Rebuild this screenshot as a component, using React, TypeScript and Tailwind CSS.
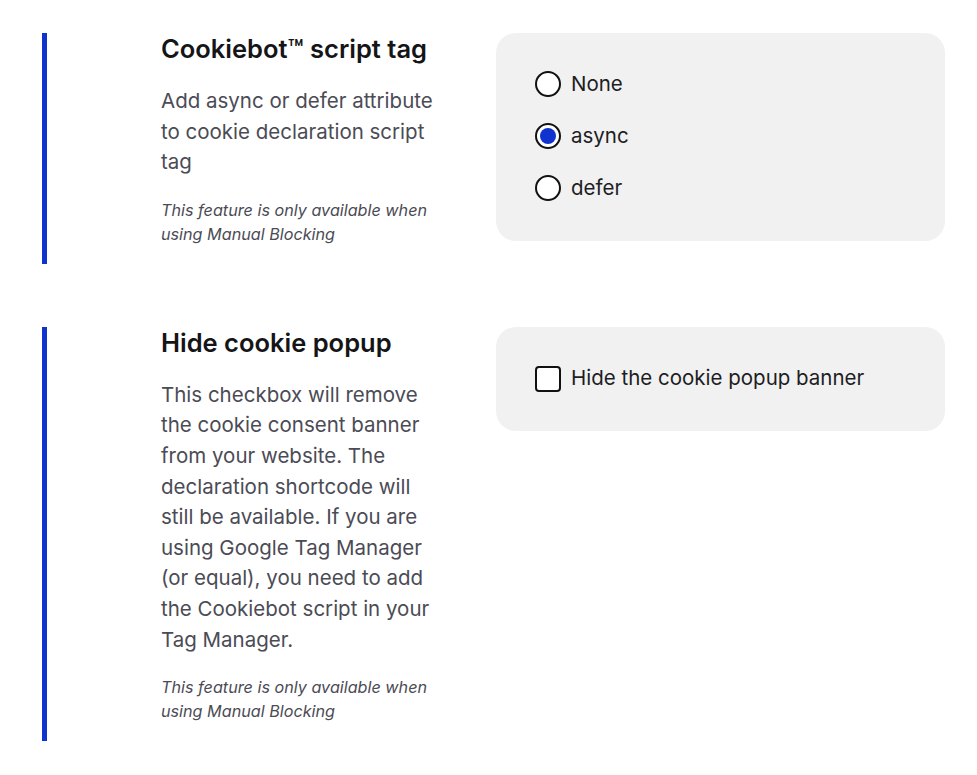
import type { ReactNode } from 'react'

const font = { fontFamily: 'Inter, "Noto Sans", sans-serif' }

function Radio({ label, checked }: { label: string; checked?: boolean }) {
  return (
    <label className="flex items-center gap-[10px] h-[26px]">
      <span className="w-[26px] h-[26px] rounded-full border-2 border-[#111] bg-white flex items-center justify-center shrink-0">
        {checked && <span className="w-[16px] h-[16px] rounded-full bg-[#1032cf]" />}
      </span>
      <span className="text-[20.5px] text-[#1d1d24]">{label}</span>
    </label>
  )
}

function Section({
  title,
  body,
  children,
}: {
  title: string
  body: string
  children: ReactNode
}) {
  return (
    <section className="flex border-l-[5px] border-[#1032cf] pl-[114px] pb-[18px]">
      <div className="w-[335px] shrink-0 pr-[55px]">
        <h2 className="text-[25.5px] leading-[32px] font-semibold text-[#151518]">{title}</h2>
        <p className="mt-[21px] text-[20.5px] leading-[30.6px] text-[#4b4b55]">{body}</p>
        <p className="mt-[20px] text-[16.2px] leading-[24px] italic text-[#4b4b55]">
          This feature is only available when using Manual Blocking
        </p>
      </div>
      <div className="w-[449px] shrink-0 self-start">{children}</div>
    </section>
  )
}

export default function App() {
  return (
    <div className="min-h-[775px] bg-white pt-[33px] pl-[42px]" style={font}>
      <div className="flex flex-col gap-[63px]">
        <Section
          title="Cookiebot™ script tag"
          body="Add async or defer attribute to cookie declaration script tag"
        >
          <div className="bg-[#f1f1f1] rounded-[20px] pl-[39px] pt-[38px] pb-[40px] flex flex-col gap-[26px]">
            <Radio label="None" />
            <Radio label="async" checked />
            <Radio label="defer" />
          </div>
        </Section>
        <Section
          title="Hide cookie popup"
          body="This checkbox will remove the cookie consent banner from your website. The declaration shortcode will still be available. If you are using Google Tag Manager (or equal), you need to add the Cookiebot script in your Tag Manager."
        >
          <div className="bg-[#f1f1f1] rounded-[20px] pl-[39px] h-[104px] flex items-center">
            <label className="flex items-center gap-[10px]">
              <span className="w-[26px] h-[26px] rounded-[4px] border-2 border-[#111] bg-white shrink-0" />
              <span className="text-[20.5px] text-[#1d1d24]">Hide the cookie popup banner</span>
            </label>
          </div>
        </Section>
      </div>
    </div>
  )
}
